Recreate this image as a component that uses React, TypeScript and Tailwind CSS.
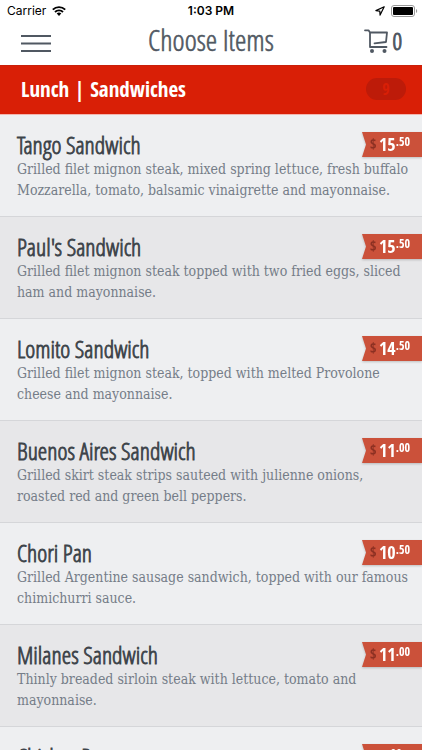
type Item = { name: string; lines: string[]; dollars: string; cents: string };

const items: Item[] = [
  { name: "Tango Sandwich", lines: ["Grilled filet mignon steak, mixed spring lettuce, fresh buffalo", "Mozzarella, tomato, balsamic vinaigrette and mayonnaise."], dollars: "15", cents: "50" },
  { name: "Paul's Sandwich", lines: ["Grilled filet mignon steak topped with two fried eggs, sliced", "ham and mayonnaise."], dollars: "15", cents: "50" },
  { name: "Lomito Sandwich", lines: ["Grilled filet mignon steak, topped with melted Provolone", "cheese and mayonnaise."], dollars: "14", cents: "50" },
  { name: "Buenos Aires Sandwich", lines: ["Grilled skirt steak strips sauteed with julienne onions,", "roasted red and green bell peppers."], dollars: "11", cents: "00" },
  { name: "Chori Pan", lines: ["Grilled Argentine sausage sandwich, topped with our famous", "chimichurri sauce."], dollars: "10", cents: "50" },
  { name: "Milanes Sandwich", lines: ["Thinly breaded sirloin steak with lettuce, tomato and", "mayonnaise."], dollars: "11", cents: "00" },
  { name: "Chicken Pan", lines: [], dollars: "9", cents: "00" },
];

function StatusBar() {
  return (
    <div className="grid h-5 grid-cols-3 items-center pt-px font-['Inter','Liberation_Sans',sans-serif] text-[12px] leading-5 text-black">
      <div className="flex items-center gap-1.5 pl-[7px]">
        <span>Carrier</span>
        <svg viewBox="0 0 14 10" className="h-2.5 w-3.5" fill="none" stroke="#000" strokeWidth="1.9">
          <path d="M.8 3.7a8.8 8.8 0 0 1 12.4 0M3 6a5.7 5.7 0 0 1 8 0" />
          <path d="M7 10 4.7 7.6a3.3 3.3 0 0 1 4.6 0z" fill="#000" stroke="none" />
        </svg>
      </div>
      <span className="text-center font-semibold">1:03 PM</span>
      <div className="flex items-center justify-end gap-1.5 pr-1">
        <svg viewBox="0 0 10 10" className="h-2.5 w-2.5" fill="none" stroke="#000" strokeWidth="1.2" strokeLinejoin="round">
          <path d="M9.2.8.9 4.6l3.9.5.3 4z" />
        </svg>
        <svg viewBox="0 0 27 12" className="h-3 w-[27px]">
          <rect x=".5" y=".5" width="23" height="11" rx="2.5" fill="none" stroke="#999" />
          <rect x="2" y="2" width="20" height="8" rx="1" />
          <path d="M25 4c1.6.7 1.6 3.3 0 4z" fill="#999" />
        </svg>
      </div>
    </div>
  );
}

function Header() {
  return (
    <header className="grid h-[45px] grid-cols-[80px_1fr_80px] items-center text-[#505862]">
      <button type="button" aria-label="Menu" className="flex h-10 items-center pt-px pl-[21px]">
        <svg viewBox="0 0 30 17" className="h-[17px] w-[30px]" stroke="currentColor" strokeWidth="2">
          <path d="M0 1h30M0 8.500h30M0 16h30" />
        </svg>
      </button>
      <h1 className="pb-1.5 text-center font-['Open_Sans_Condensed_Light','Roboto_Condensed',sans-serif] text-[29px] leading-9 [-webkit-text-stroke:0.6px_#505862]">
        Choose Items
      </h1>
      <button type="button" aria-label="Cart, 0 items" className="flex items-center justify-end gap-1 pr-5 pb-1">
        <svg viewBox="0 0 24 24" className="h-6 w-6" fill="none" stroke="currentColor" strokeWidth="1.8" strokeLinecap="round" strokeLinejoin="round">
          <path d="M1 1.300h3.500L6 3.500V18h16.500M6 3.500h17l-1 9.500-11.500 1.300" />
          <circle cx="8" cy="22" r="2" fill="currentColor" stroke="none" />
          <circle cx="20.500" cy="22" r="2" fill="currentColor" stroke="none" />
        </svg>
        <span className="font-['Open_Sans_Condensed_Light','Roboto_Condensed',sans-serif] text-[24px] leading-6 [-webkit-text-stroke:1px_#505862]">0</span>
      </button>
    </header>
  );
}

function PriceTag({ dollars, cents }: { dollars: string; cents: string }) {
  return (
    <div className="absolute top-[17px] right-0 drop-shadow-[0_1px_1px_rgba(0,0,0,0.2)]">
      <div className="flex h-[25px] w-[60px] items-start bg-[#cb513a] pl-2 font-['Open_Sans_Condensed','Roboto_Condensed',sans-serif] font-bold text-white [clip-path:polygon(0_0,100%_0,100%_100%,0_100%,4px_50%)]">
        <span className="w-[9px] pt-0.5 text-[14px] leading-5 text-[#8c3022]">$</span>
        <span className="text-[18px] leading-6">{dollars}</span>
        <span className="text-[12px] leading-5">.{cents}</span>
      </div>
    </div>
  );
}

export default function App() {
  return (
    <div className="h-screen overflow-hidden bg-white">
      <StatusBar />
      <Header />
      <main>
        <div className="flex h-[50px] items-center justify-between border-y border-t-[#c9200a] border-b-[#f3b5ae] bg-[#d91f06] pr-4 pb-0.5 pl-[21px] font-['Open_Sans_Condensed','Roboto_Condensed',sans-serif] font-bold">
          <h2 className="text-[21px] leading-7 text-white">Lunch | Sandwiches</h2>
          <span className="h-[22px] w-10 rounded-full bg-[#bd1b09] text-center text-[16px] leading-[22px] text-[#d91f06]">9</span>
        </div>
        <ul>
          {items.map((item) => (
            <li key={item.name} className="relative h-[102px] border-b border-[#d5d6d9] bg-[#eeeff1] pt-4 pl-[17px] even:bg-[#e7e7e9]">
              <h3 className="font-['Open_Sans_Condensed_Light','Roboto_Condensed',sans-serif] text-[24px] leading-7 text-[#3c4349] [-webkit-text-stroke:0.8px_#3c4349]">{item.name}</h3>
              <p className="font-['DejaVu_Serif_Condensed','DejaVu_Serif',serif] text-[14px] leading-[21px] whitespace-nowrap text-[#757d88]">
                {item.lines.map((line) => (
                  <span key={line} className="block">{line}</span>
                ))}
              </p>
              <PriceTag dollars={item.dollars} cents={item.cents} />
            </li>
          ))}
        </ul>
      </main>
    </div>
  );
}
